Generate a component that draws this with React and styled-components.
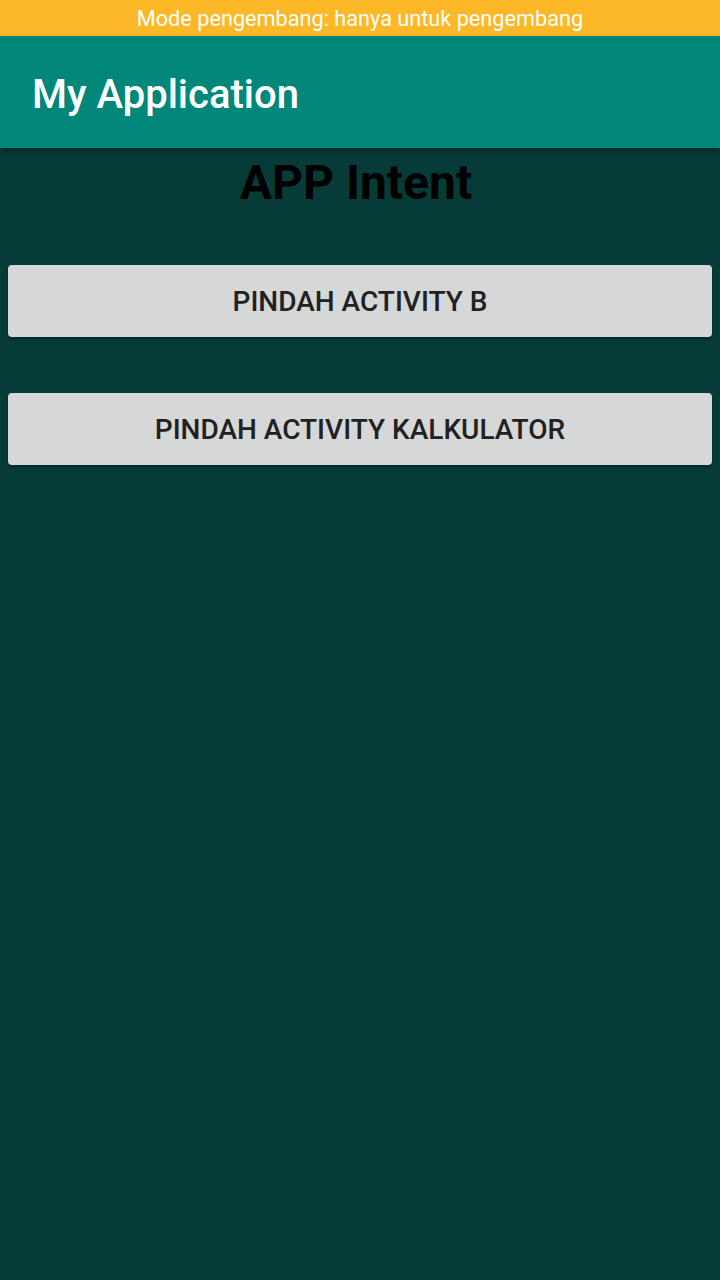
import React from 'react';
import styled, { createGlobalStyle } from 'styled-components';

const GlobalStyle = createGlobalStyle`
  html, body {
    margin: 0;
    padding: 0;
    background-color: #073b37;
    font-family: Roboto, 'Noto Sans', sans-serif;
  }
`;

const Screen = styled.div`
  width: 720px;
  height: 1280px;
  display: flex;
  flex-direction: column;
  background-color: #073b37;
  overflow: hidden;
`;

const StatusBar = styled.div`
  height: 36px;
  background-color: #fdb827;
  color: #ffffff;
  font-size: 21.7px;
  display: flex;
  align-items: center;
  justify-content: center;
`;

const Toolbar = styled.header`
  height: 112px;
  box-sizing: border-box;
  background-color: #00877a;
  display: flex;
  align-items: center;
  padding: 4px 0 0 32px;
  box-shadow: 0 3px 6px rgba(0, 0, 0, 0.35);
  position: relative;
  z-index: 1;
`;

const ToolbarTitle = styled.h1`
  margin: 0;
  color: #ffffff;
  font-size: 40px;
  font-weight: 500;
`;

const Content = styled.main`
  display: flex;
  flex-direction: column;
  padding: 0 8px;
`;

const Heading = styled.h2`
  margin: 5px 8px 0 0;
  text-align: center;
  font-size: 48px;
  font-weight: 700;
  color: #000000;
  line-height: 60px;
`;

const ButtonList = styled.div`
  display: flex;
  flex-direction: column;
  gap: 56px;
  margin-top: 52px;
`;

const ActionButton = styled.button`
  height: 72px;
  border: none;
  border-radius: 4px;
  background-color: #d6d7d7;
  color: #212121;
  font-family: Roboto, 'Noto Sans', sans-serif;
  font-size: 28px;
  font-weight: 500;
  text-transform: uppercase;
  cursor: pointer;
  box-shadow: 0 2px 3px rgba(0, 0, 0, 0.3);
`;

export default function App() {
  return (
    <>
      <GlobalStyle />
      <Screen>
        <StatusBar>Mode pengembang: hanya untuk pengembang</StatusBar>
        <Toolbar>
          <ToolbarTitle>My Application</ToolbarTitle>
        </Toolbar>
        <Content>
          <Heading>APP Intent</Heading>
          <ButtonList>
            <ActionButton>Pindah Activity B</ActionButton>
            <ActionButton>Pindah Activity Kalkulator</ActionButton>
          </ButtonList>
        </Content>
      </Screen>
    </>
  );
}
